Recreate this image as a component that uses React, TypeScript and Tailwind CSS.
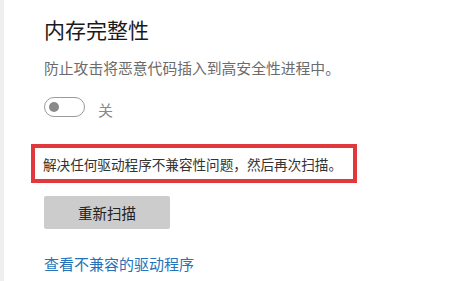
export default function App() {
  return (
    <div
      className="w-[455px] h-[281px] overflow-hidden bg-white border-l-4 border-[#efefef] pl-10 pt-[19px] flex flex-col items-start"
      style={{ fontFamily: '"Noto Sans CJK SC", "Noto Sans", sans-serif' }}
    >
      <h1 className="text-[21px] leading-[21px] text-[#1a1a1a]">内存完整性</h1>
      <p className="mt-[20px] text-[14.8px] leading-[15px] text-[#6b6b6b]">
        防止攻击将恶意代码插入到高安全性进程中。
      </p>

      <div className="mt-[22px] flex items-center gap-[13px]">
        <div className="w-[41px] h-[20px] rounded-full border-[1.5px] border-[#9a9a9a] flex items-center pl-[3.5px]">
          <div className="w-[10px] h-[10px] rounded-full bg-[#8a8a8a]" />
        </div>
        <span className="text-[15px] leading-[15px] text-[#8a8a8a] mt-[4px]">关</span>
      </div>

      <div className="mt-[27px] -ml-[13px] w-[326px] h-[39px] border-4 border-[#e0383c] flex items-center pl-[8px]">
        <span className="text-[13.6px] leading-[14px] text-[#333]">
          解决任何驱动程序不兼容性问题，然后再次扫描。
        </span>
      </div>

      <button className="mt-[13px] w-[126px] h-[33px] bg-[#cccccc] rounded-[2px] flex items-center justify-center text-[14.5px] leading-[15px] text-[#222]">
        重新扫描
      </button>

      <a className="mt-[27px] text-[15px] leading-[15px] text-[#2672b8] cursor-pointer">
        查看不兼容的驱动程序
      </a>
    </div>
  );
}
